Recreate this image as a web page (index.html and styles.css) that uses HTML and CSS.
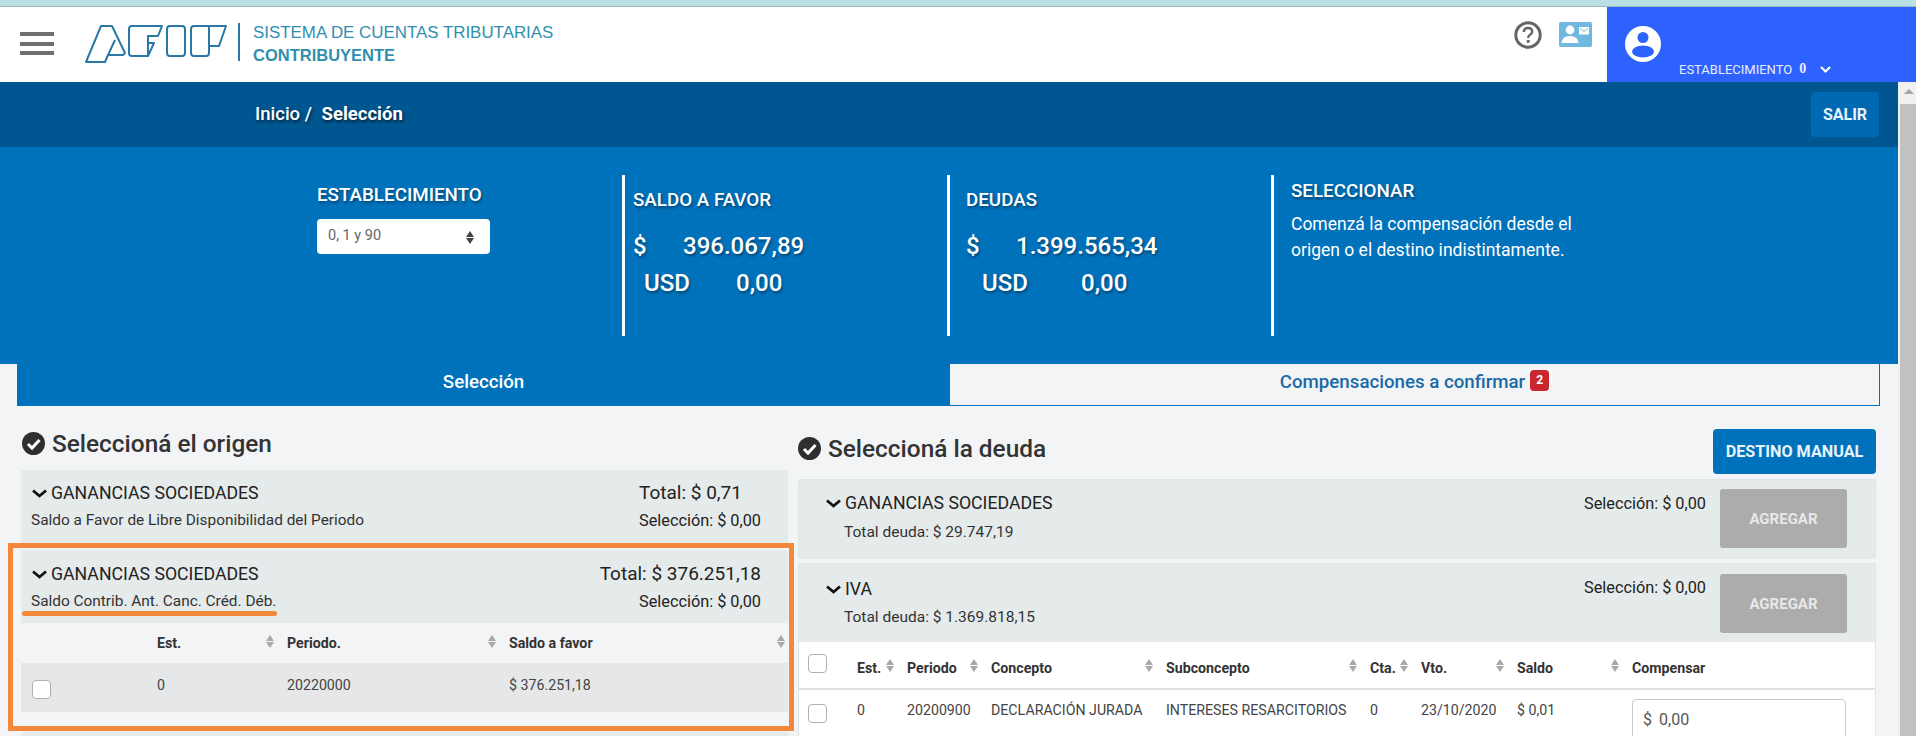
FILE: index.html
```html
<!DOCTYPE html>
<html lang="es">
<head>
    <meta charset="UTF-8">
    <title>Sistema de Cuentas Tributarias</title>
    <link rel="stylesheet" href="styles.css">
</head>
<body>
    <div class="top-strip"></div>
    <header class="app-header">
        <div class="hamburger"><span></span><span></span><span></span></div>
        <svg class="logo" viewBox="0 0 142 38" width="142" height="38" fill="none" stroke="#2a78a6" stroke-width="2" stroke-linejoin="round">
            <path d="M1 37 L16 1 H27 L40 28 L38 30 H23 L20 37 H2 Z"/>
            <path d="M23 30 L30 15"/>
            <path d="M44 4 Q44 1 47 1 H77 L73 11 H63 V31 H47 Q44 31 44 28 Z"/>
            <path d="M63 18 H69 L63 31"/>
            <rect x="82" y="1" width="18" height="30" rx="3"/>
            <path d="M106 4 Q106 1 109 1 H141 L134 21 H124 V28 Q124 31 121 31 H109 Q106 31 106 28 Z"/>
            <path d="M124 1 V21"/>
        </svg>
        <div class="app-name">
            <div class="app-name-main">SISTEMA DE CUENTAS TRIBUTARIAS</div>
            <div class="app-name-sub">CONTRIBUYENTE</div>
        </div>
        <div class="header-icons">
            <svg width="28" height="28" viewBox="0 0 28 28">
                <circle cx="14" cy="14" r="12.2" fill="none" stroke="#666" stroke-width="3"/>
                <path d="M9.8 11 Q10 7 14 7 Q18.2 7 18.2 10.6 Q18.2 12.6 16 13.8 Q14.2 14.8 14.2 17" fill="none" stroke="#666" stroke-width="2.4"/>
                <rect x="12.8" y="19" width="2.8" height="2.8" fill="#666"/>
            </svg>
            <svg class="card-icon" width="33" height="25" viewBox="0 0 33 25">
                <rect width="33" height="25" rx="2" fill="#6fb8df"/>
                <circle cx="11" cy="8" r="4.4" fill="#fff"/>
                <path d="M2.5 21 Q3 14 11 14 Q19 14 19.5 21 Z" fill="#fff"/>
                <rect x="20" y="5" width="10" height="7.5" fill="#fff"/>
                <path d="M21 6.5 L25 9.5 L29 6.5" fill="none" stroke="#6fb8df" stroke-width="1"/>
            </svg>
        </div>
        <div class="user-box">
            <svg class="user-icon" width="36" height="36" viewBox="0 0 36 36">
                <circle cx="18" cy="18" r="18" fill="#fff"/>
                <circle cx="18" cy="11.5" r="5.5" fill="#2e62ff"/>
                <ellipse cx="18" cy="25.5" rx="11" ry="6" fill="#2e62ff"/>
            </svg>
            <div class="user-est">
                <span>ESTABLECIMIENTO</span>
                <b>0</b>
                <svg width="11" height="7" viewBox="0 0 11 7"><path d="M1 1 L5.5 5.5 L10 1" fill="none" stroke="#fff" stroke-width="2"/></svg>
            </div>
        </div>
    </header>

    <div class="below-header">
        <div class="main-area">
            <div class="breadcrumb-bar">
                <div class="breadcrumb"><span>Inicio /</span> <b>Selección</b></div>
                <a href="#" class="btn-salir">SALIR</a>
            </div>

            <section class="hero">
                <div class="hero-col hero-est">
                    <h3>ESTABLECIMIENTO</h3>
                    <div class="fake-select">
                        <span>0, 1 y 90</span>
                        <i class="sort sort-dark"></i>
                    </div>
                </div>
                <div class="hero-col hero-saldo">
                    <h3>SALDO A FAVOR</h3>
                    <div class="amount"><span class="cur">$</span><span class="val-a">396.067,89</span></div>
                    <div class="amount"><span class="cur-usd">USD</span><span class="val-b">0,00</span></div>
                </div>
                <div class="hero-col hero-deuda">
                    <h3>DEUDAS</h3>
                    <div class="amount"><span class="cur">$</span><span class="val-a">1.399.565,34</span></div>
                    <div class="amount"><span class="cur-usd">USD</span><span class="val-b">0,00</span></div>
                </div>
                <div class="hero-col hero-sel">
                    <h3>SELECCIONAR</h3>
                    <p>Comenzá la compensación desde el<br>origen o el destino indistintamente.</p>
                </div>
            </section>

            <nav class="tabs">
                <a href="#" class="tab tab-active">Selección</a>
                <a href="#" class="tab">Compensaciones a confirmar <span class="badge">2</span></a>
            </nav>

            <div class="content">
                <section class="col-origen">
                    <h2 class="section-title">
                        <svg class="check-icon" width="23" height="23" viewBox="0 0 23 23"><circle cx="11.5" cy="11.5" r="11.5" fill="#2f2f2f"/><path d="M6 12 L10 16 L17.5 8" fill="none" stroke="#fff" stroke-width="3"/></svg>
                        Seleccioná el origen
                    </h2>
                    <div class="card">
                        <div class="card-head">
                            <div>
                                <div class="card-name"><svg class="chev" width="15" height="9" viewBox="0 0 15 9"><path d="M1 1.5 L7.5 7 L14 1.5" fill="none" stroke="#111" stroke-width="2.8"/></svg>GANANCIAS SOCIEDADES</div>
                                <div class="card-sub">Saldo a Favor de Libre Disponibilidad del Periodo</div>
                            </div>
                            <div class="card-totals">
                                <div class="total">Total: $ 0,71</div>
                                <div class="selec">Selección: $ 0,00</div>
                            </div>
                        </div>
                    </div>
                    <div class="card">
                        <div class="card-head">
                            <div>
                                <div class="card-name"><svg class="chev" width="15" height="9" viewBox="0 0 15 9"><path d="M1 1.5 L7.5 7 L14 1.5" fill="none" stroke="#111" stroke-width="2.8"/></svg>GANANCIAS SOCIEDADES</div>
                                <div class="card-sub">Saldo Contrib. Ant. Canc. Créd. Déb.</div>
                            </div>
                            <div class="card-totals">
                                <div class="total total-big">Total: $ 376.251,18</div>
                                <div class="selec">Selección: $ 0,00</div>
                            </div>
                        </div>
                        <table class="tbl tbl-origen">
                            <colgroup><col class="o1"><col class="o2"><col class="o3"><col class="o4"></colgroup>
                            <thead>
                                <tr>
                                    <th></th>
                                    <th><div class="th-in">Est.<i class="sort"></i></div></th>
                                    <th><div class="th-in">Periodo.<i class="sort"></i></div></th>
                                    <th class="th-last"><div class="th-in">Saldo a favor<i class="sort"></i></div></th>
                                </tr>
                            </thead>
                            <tbody>
                                <tr>
                                    <td><span class="chk"></span></td>
                                    <td>0</td>
                                    <td>20220000</td>
                                    <td>$ 376.251,18</td>
                                </tr>
                            </tbody>
                        </table>
                    </div>
                    <div class="card card-next"></div>
                </section>

                <section class="col-deuda">
                    <div class="deuda-top">
                        <h2 class="section-title">
                            <svg class="check-icon" width="23" height="23" viewBox="0 0 23 23"><circle cx="11.5" cy="11.5" r="11.5" fill="#2f2f2f"/><path d="M6 12 L10 16 L17.5 8" fill="none" stroke="#fff" stroke-width="3"/></svg>
                            Seleccioná la deuda
                        </h2>
                        <a href="#" class="btn-destino">DESTINO MANUAL</a>
                    </div>
                    <div class="card card-deuda">
                        <div class="deuda-head">
                            <div>
                                <div class="card-name"><svg class="chev" width="15" height="9" viewBox="0 0 15 9"><path d="M1 1.5 L7.5 7 L14 1.5" fill="none" stroke="#111" stroke-width="2.8"/></svg>GANANCIAS SOCIEDADES</div>
                                <div class="deuda-sub">Total deuda: $ 29.747,19</div>
                            </div>
                            <div class="selec deuda-selec">Selección: $ 0,00</div>
                            <a href="#" class="btn-agregar">AGREGAR</a>
                        </div>
                    </div>
                    <div class="card card-deuda">
                        <div class="deuda-head">
                            <div>
                                <div class="card-name"><svg class="chev" width="15" height="9" viewBox="0 0 15 9"><path d="M1 1.5 L7.5 7 L14 1.5" fill="none" stroke="#111" stroke-width="2.8"/></svg>IVA</div>
                                <div class="deuda-sub">Total deuda: $ 1.369.818,15</div>
                            </div>
                            <div class="selec deuda-selec">Selección: $ 0,00</div>
                            <a href="#" class="btn-agregar">AGREGAR</a>
                        </div>
                        <table class="tbl tbl-deuda">
                            <colgroup><col class="d1"><col class="d2"><col class="d3"><col class="d4"><col class="d5"><col class="d6"><col class="d7"><col class="d8"><col class="d9"></colgroup>
                            <thead>
                                <tr>
                                    <th><span class="chk"></span></th>
                                    <th><div class="th-in">Est.<i class="sort"></i></div></th>
                                    <th><div class="th-in">Periodo<i class="sort"></i></div></th>
                                    <th><div class="th-in">Concepto<i class="sort"></i></div></th>
                                    <th><div class="th-in">Subconcepto<i class="sort"></i></div></th>
                                    <th><div class="th-in">Cta.<i class="sort"></i></div></th>
                                    <th><div class="th-in">Vto.<i class="sort"></i></div></th>
                                    <th><div class="th-in">Saldo<i class="sort"></i></div></th>
                                    <th>Compensar</th>
                                </tr>
                            </thead>
                            <tbody>
                                <tr>
                                    <td><span class="chk"></span></td>
                                    <td>0</td>
                                    <td>20200900</td>
                                    <td>DECLARACIÓN JURADA</td>
                                    <td>INTERESES RESARCITORIOS</td>
                                    <td>0</td>
                                    <td>23/10/2020</td>
                                    <td>$ 0,01</td>
                                    <td><div class="money-input"><span>$</span> 0,00</div></td>
                                </tr>
                            </tbody>
                        </table>
                    </div>
                </section>
            </div>

            <!-- orange marks drawn over the screenshot -->
            <div class="mark-box"></div>
            <div class="mark-line"></div>
        </div>
        <div class="scrollbar">
            <div class="scroll-up"></div>
            <div class="scroll-thumb"></div>
        </div>
    </div>
</body>
</html>
```

FILE: styles.css
```css
* {
    box-sizing: border-box;
}
html, body {
    margin: 0;
    height: 736px;
    overflow: hidden;
}
body {
    font-family: Roboto, 'Liberation Sans', sans-serif;
    background-color: #f2f4f6;
    color: #222;
    display: flex;
    flex-direction: column;
}
a {
    text-decoration: none;
}

/* Header */
.top-strip {
    height: 7px;
    background-color: #b9e0e4;
    border-bottom: 1px solid #9fb8c0;
}
.app-header {
    height: 75px;
    background-color: #fff;
    display: flex;
    align-items: flex-start;
}
.hamburger {
    width: 34px;
    margin: 25px 0 0 20px;
    display: flex;
    flex-direction: column;
    gap: 5.5px;
}
.hamburger span {
    height: 4px;
    background-color: #6f6f6f;
}
.logo {
    margin: 18px 0 0 31px;
}
.app-name {
    margin: 16px 0 0 11px;
    padding-left: 13px;
    height: 38px;
    border-left: 2px solid #2a78a6;
    font-family: 'Liberation Sans', Arial, sans-serif;
    color: #2f8fae;
    width: 400px;
}
.app-name-main {
    font-size: 16.9px;
    line-height: 20px;
}
.app-name-sub {
    font-size: 16.5px;
    font-weight: bold;
    line-height: 20px;
    margin-top: 2px;
}
.header-icons {
    margin-left: auto;
    margin-top: 14px;
    display: flex;
    align-items: flex-start;
    gap: 17px;
    margin-right: 15px;
}
.card-icon {
    margin-top: 1px;
}
.user-box {
    width: 309px;
    height: 75px;
    background-color: #2e62ff;
    color: #e8eeff;
    position: relative;
    display: flex;
}
.user-icon {
    margin: 19px 0 0 18px;
}
.user-est {
    margin: 53px 0 0 18px;
    display: flex;
    align-items: center;
    height: 18px;
    font-size: 13px;
}
.user-est b {
    font-family: 'Liberation Serif', serif;
    font-size: 14px;
    margin: 0 14px 0 7px;
}

/* Main */
.below-header {
    flex: 1;
    display: flex;
    min-height: 0;
    position: relative;
}
.main-area {
    flex: 1;
    min-width: 0;
}
.breadcrumb-bar {
    height: 65px;
    background-color: #005690;
    color: #fff;
    display: flex;
    align-items: center;
    justify-content: space-between;
    padding: 0 19px 0 255px;
}
.breadcrumb {
    font-size: 18.5px;
    font-weight: 500;
    margin-top: -2px;
    text-shadow: 1px 2px 3px rgba(0, 0, 0, 0.6);
}
.breadcrumb b {
    font-weight: 700;
    margin-left: 5px;
}
.btn-salir {
    width: 68px;
    height: 45px;
    background-color: #0069b4;
    color: #e8f4fb;
    border-radius: 4px;
    display: flex;
    align-items: center;
    justify-content: center;
    font-size: 16px;
    font-weight: 700;
}

/* Blue totals band */
.hero {
    height: 217px;
    background-color: #0072bb;
    color: #fff;
    padding: 28px 0 0 317px;
    display: flex;
    align-items: flex-start;
    text-shadow: 1px 2px 3px rgba(0, 0, 0, 0.4);
}
.hero-col {
    height: 161px;
}
.hero-col h3 {
    margin: 0;
    font-size: 18.8px;
    font-weight: 500;
    line-height: 22px;
}
.hero-est {
    width: 305px;
    padding-top: 9px;
}
.hero-saldo {
    width: 325px;
    border-left: 3px solid #fff;
    padding: 14px 0 0 8px;
}
.hero-deuda {
    width: 324px;
    border-left: 3px solid #fff;
    padding: 14px 0 0 16px;
}
.hero-sel {
    border-left: 3px solid #fff;
    padding: 5px 0 0 17px;
}
.hero-sel p {
    margin: 9px 0 0;
    font-size: 17.5px;
    line-height: 26px;
    text-shadow: none;
}
.fake-select {
    width: 173px;
    height: 35px;
    margin-top: 13px;
    background-color: #fff;
    border-radius: 4px;
    color: #666;
    font-size: 14.5px;
    padding: 0 15px 3px 11px;
    display: flex;
    align-items: center;
    justify-content: space-between;
    text-shadow: none;
}
.amount {
    font-size: 24px;
    font-weight: 500;
    line-height: 37px;
    display: flex;
}
.amount:first-of-type {
    margin-top: 17px;
}
.hero-saldo .cur { width: 50px; }
.hero-saldo .cur-usd { margin-left: 11px; width: 92px; }
.hero-deuda .cur { width: 50px; }
.hero-deuda .cur-usd { margin-left: 16px; width: 99px; }

/* Tabs */
.tabs {
    display: flex;
    height: 42px;
    margin: 0 18px 0 17px;
    font-size: 18.7px;
    font-weight: 500;
}
.tab {
    flex: 1;
    display: flex;
    align-items: center;
    justify-content: center;
    gap: 5px;
    padding-bottom: 6px;
    color: #1a6aa6;
    border-right: 1px solid #0072bb;
    border-bottom: 1px solid #0072bb;
}
.tab-active {
    flex: none;
    width: 933px;
    background-color: #0072bb;
    color: #fff;
    border: none;
}
.badge {
    background-color: #c8282d;
    color: #fff;
    font-size: 12px;
    font-weight: 700;
    width: 19px;
    height: 21px;
    border-radius: 4px;
    display: flex;
    align-items: center;
    justify-content: center;
    margin-top: -3px;
}

/* Two columns below the tabs */
.content {
    display: flex;
    padding-left: 21px;
    gap: 10px;
}
.col-origen {
    width: 767px;
    flex: none;
}
.col-deuda {
    width: 1078px;
    flex: none;
}
.section-title {
    margin: 0;
    font-size: 24.4px;
    font-weight: 500;
    color: #333;
    display: flex;
    align-items: center;
    gap: 7px;
}
.col-origen .section-title {
    height: 64px;
    padding-top: 10px;
    padding-left: 1px;
}
.deuda-top {
    height: 73px;
    display: flex;
    align-items: flex-start;
    justify-content: space-between;
}
.deuda-top .section-title {
    margin-top: 28px;
    height: 28px;
}
.btn-destino {
    height: 45px;
    width: 163px;
    margin-top: 23px;
    background-color: #0072bb;
    color: #e8f4fb;
    border-radius: 4px;
    font-size: 16.2px;
    font-weight: 700;
    display: flex;
    align-items: center;
    justify-content: center;
}
.card {
    background-color: #e5eaeb;
    margin-bottom: 4px;
    border-radius: 3px;
}
.card-head {
    display: flex;
    justify-content: space-between;
    height: 76px;
    padding: 11px 27px 0 11px;
}
.card-name {
    font-size: 17.7px;
    line-height: 24px;
    display: flex;
    align-items: center;
    color: #222;
}
.chev {
    margin-right: 4px;
}
.card-sub {
    font-size: 15.4px;
    line-height: 20px;
    margin: 5px 0 0 -1px;
    color: #333;
}
.card-totals {
    width: 122px;
    display: flex;
    flex-direction: column;
    align-items: flex-start;
}
.total {
    font-size: 19px;
    line-height: 24px;
    white-space: nowrap;
}
.total-big {
    align-self: flex-end;
}
.selec {
    font-size: 16.3px;
    line-height: 20px;
    margin-top: 6px;
    white-space: nowrap;
}

/* Debt cards */
.card-deuda {
    border: 1px solid #dfe4e5;
    border-bottom: none;
}
.deuda-head {
    display: flex;
    height: 78px;
    padding: 10px 0 0 27px;
    align-items: flex-start;
}
.deuda-sub {
    font-size: 15.5px;
    line-height: 20px;
    margin: 7px 0 0 18px;
    color: #333;
}
.deuda-selec {
    margin: 4px 14px 0 auto;
}
.btn-agregar {
    width: 127px;
    height: 59px;
    margin-right: 28px;
    background-color: #acacac;
    color: #e8e8e8;
    border-radius: 3px;
    font-size: 15px;
    font-weight: 700;
    display: flex;
    align-items: center;
    justify-content: center;
}
.deuda-top + .card-deuda .card-name {
    margin-top: 1px;
}
.deuda-top + .card-deuda .btn-agregar {
    margin-top: -1px;
}
.deuda-top + .card-deuda .deuda-head {
    height: 79px;
}
.card-deuda + .card-deuda .card-name {
    margin-top: 3px;
}
.card-deuda + .card-deuda .deuda-sub {
    margin-top: 6px;
}

/* Tables */
.tbl {
    width: 100%;
    border-collapse: collapse;
    table-layout: fixed;
    font-size: 14.2px;
    color: #444;
}
.tbl th {
    text-align: left;
    font-weight: 700;
    color: #333;
    padding: 0;
}
.tbl td {
    padding: 0;
}
.th-in {
    display: flex;
    justify-content: space-between;
    align-items: center;
    padding-right: 12.5px;
}
.th-last .th-in {
    padding-right: 2px;
}
.col-origen .card:nth-of-type(2) {
    padding-bottom: 13px;
    background: linear-gradient(#e5eaeb, #e5eaeb) top / 100% 73px no-repeat #f2f4f6;
    margin-bottom: 7px;
}
.col-origen .card:nth-of-type(2) .card-head {
    height: 73px;
    padding-top: 12px;
}
.tbl-origen {
    background-color: #f2f4f6;
}
.tbl-origen thead tr {
    height: 40px;
}
.tbl-origen tbody tr {
    height: 49px;
    background-color: #e5e7e9;
}
.tbl-origen tbody td {
    padding-bottom: 6px;
}
.tbl-origen tbody td:first-child {
    padding: 4px 0 0 11px;
}
.o1 { width: 136px; }
.o2 { width: 130px; }
.o3 { width: 222px; }
.o4 { width: 279px; }
.card-next {
    height: 30px;
    margin: 0;
}
.tbl-deuda {
    background-color: #fff;
}
.tbl-deuda thead tr {
    height: 47px;
    border-bottom: 2px solid #dee2e6;
}
.tbl-deuda thead th {
    padding-top: 5px;
}
.tbl-deuda thead th:first-child {
    padding: 0 0 4px 9px;
}
.tbl-deuda tbody tr {
    height: 70px;
    vertical-align: top;
}
.tbl-deuda tbody td {
    padding-top: 12px;
}
.tbl-deuda tbody td:first-child {
    padding: 14px 0 0 9px;
}
.tbl-deuda tbody td:last-child {
    padding-top: 9px;
}
.d1 { width: 58px; }
.d2 { width: 50px; }
.d3 { width: 84px; }
.d4 { width: 175px; }
.d5 { width: 204px; }
.d6 { width: 51px; }
.d7 { width: 96px; }
.d8 { width: 115px; }
.d9 { width: 243px; }
.chk {
    display: block;
    width: 19px;
    height: 19px;
    background-color: #fff;
    border: 1px solid #b0b0b0;
    border-radius: 4px;
}
.money-input {
    width: 214px;
    height: 40px;
    border: 1px solid #c9c9c9;
    border-radius: 4px;
    background-color: #fff;
    font-size: 16px;
    color: #555;
    display: flex;
    align-items: center;
    gap: 7px;
    padding-left: 10px;
}

/* Sort arrows */
.sort {
    display: inline-block;
    width: 9px;
    height: 13px;
    flex: none;
    position: relative;
    top: -2px;
}
.sort::before,
.sort::after {
    content: "";
    position: absolute;
    left: 0;
    border-left: 4.5px solid transparent;
    border-right: 4.5px solid transparent;
}
.sort::before {
    top: 0;
    border-bottom: 6px solid #a8a8a8;
}
.sort::after {
    bottom: 0;
    border-top: 6px solid #a8a8a8;
}
.sort-dark {
    top: 2px;
}
.sort-dark::before {
    border-bottom-color: #444;
}
.sort-dark::after {
    border-top-color: #444;
}

/* Annotation marks */
.mark-box {
    position: absolute;
    left: 8px;
    top: 461px;
    width: 786px;
    height: 188px;
    border: 5px solid #f5873a;
}
.mark-line {
    position: absolute;
    left: 22px;
    top: 529px;
    width: 255px;
    height: 5px;
    background-color: #f5873a;
    border-radius: 3px;
}

/* Scrollbar */
.scrollbar {
    width: 18px;
    background-color: #f1f1f1;
    padding-left: 2px;
    overflow: hidden;
}
.scroll-up {
    height: 22px;
    position: relative;
}
.scroll-up::before {
    content: "";
    position: absolute;
    left: 4px;
    top: 7px;
    border-left: 5px solid transparent;
    border-right: 5px solid transparent;
    border-bottom: 5px solid #a6a6a6;
}
.scroll-thumb {
    height: 640px;
    background-color: #c1c1c1;
}
```
